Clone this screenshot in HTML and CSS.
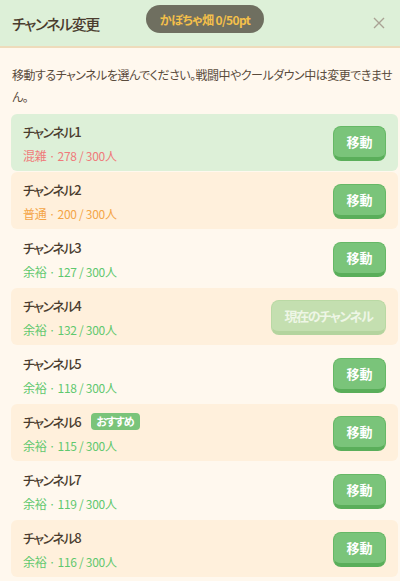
FILE: index.html
```html
<!DOCTYPE html>
<html lang="ja">
<head>
<meta charset="utf-8">
<link rel="stylesheet" href="styles.css">
</head>
<body>
<div class="modal">
  <div class="header">
    <div class="title">チャンネル変更</div>
    <div class="points">かぼちゃ畑 0/50pt</div>
    <button class="close" aria-label="閉じる">
      <svg width="12" height="12" viewBox="0 0 12 12"><path d="M1 1L11 11M11 1L1 11" stroke="#aaa294" stroke-width="1.4" fill="none"/></svg>
    </button>
  </div>
  <div class="body">
    <p class="desc">移動するチャンネルを選んでください。戦闘中やクールダウン中は変更できません。</p>
    <ul class="list">
      <li class="row hover">
        <div class="info"><div class="name">チャンネル1</div><div class="stat busy">混雑 · 278 / 300人</div></div>
        <button class="btn">移動</button>
      </li>
      <li class="row alt">
        <div class="info"><div class="name">チャンネル2</div><div class="stat normal">普通 · 200 / 300人</div></div>
        <button class="btn">移動</button>
      </li>
      <li class="row">
        <div class="info"><div class="name">チャンネル3</div><div class="stat free">余裕 · 127 / 300人</div></div>
        <button class="btn">移動</button>
      </li>
      <li class="row alt">
        <div class="info"><div class="name">チャンネル4</div><div class="stat free">余裕 · 132 / 300人</div></div>
        <button class="btn current">現在のチャンネル</button>
      </li>
      <li class="row">
        <div class="info"><div class="name">チャンネル5</div><div class="stat free">余裕 · 118 / 300人</div></div>
        <button class="btn">移動</button>
      </li>
      <li class="row alt">
        <div class="info"><div class="name">チャンネル6<span class="tag">おすすめ</span></div><div class="stat free">余裕 · 115 / 300人</div></div>
        <button class="btn">移動</button>
      </li>
      <li class="row">
        <div class="info"><div class="name">チャンネル7</div><div class="stat free">余裕 · 119 / 300人</div></div>
        <button class="btn">移動</button>
      </li>
      <li class="row alt">
        <div class="info"><div class="name">チャンネル8</div><div class="stat free">余裕 · 116 / 300人</div></div>
        <button class="btn">移動</button>
      </li>
    </ul>
  </div>
</div>
</body>
</html>
```

FILE: styles.css
```css
* { box-sizing: border-box; }
html, body {
  margin: 0;
  padding: 0;
  background: #fff8ee;
  font-family: "Noto Sans CJK JP", "Noto Sans", sans-serif;
  font-feature-settings: "palt";
  color: #4a3c2e;
}
.modal {
  width: 400px;
  height: 581px;
  overflow: hidden;
  background: #fff8ee;
}
.header {
  position: relative;
  height: 48px;
  background: #ddf0d8;
  border-bottom: 2px solid #eedbbb;
  display: flex;
  align-items: center;
  justify-content: space-between;
  padding: 0 12px;
}
.title {
  font-size: 15px;
  font-weight: 500;
  letter-spacing: -1.5px;
  color: #4a3c2e;
  margin-top: 1px;
}
.points {
  position: absolute;
  left: 146px;
  top: 5px;
  width: 118px;
  height: 28px;
  border-radius: 14px;
  background: #6f6f60;
  color: #f4c04a;
  font-size: 12px;
  font-weight: 700;
  letter-spacing: -0.6px;
  display: flex;
  align-items: center;
  justify-content: center;
}
.close {
  background: none;
  border: 0;
  padding: 0;
  width: 12px;
  height: 12px;
  display: flex;
  margin-right: 3px;
}
.body {
  padding: 16px 2px 0 11px;
}
.desc {
  margin: 0 0 6px 1px;
  font-size: 12px;
  line-height: 22px;
  letter-spacing: -0.5px;
  color: #5a4b3c;
}
.list {
  list-style: none;
  margin: 0;
  padding: 0;
  display: flex;
  flex-direction: column;
  gap: 1px;
}
.row {
  height: 57px;
  border-radius: 6px;
  display: flex;
  align-items: center;
  justify-content: space-between;
  padding: 1px 12px 0;
}
.row.alt { background: #fff0dc; }
.row.hover { background: #ddf0d8; }
.info {
  display: flex;
  flex-direction: column;
  gap: 5px;
}
.name {
  font-size: 13px;
  font-weight: 500;
  line-height: 20px;
  letter-spacing: -1.4px;
  color: #4a3c2e;
  display: flex;
  align-items: center;
  gap: 11px;
}
.tag {
  background: #7ac47a;
  color: #fff;
  font-size: 11px;
  font-weight: 700;
  line-height: 17px;
  letter-spacing: -1px;
  padding: 0 6px 0 5px;
  border-radius: 4px;
}
.stat {
  font-size: 12px;
  line-height: 18px;
  letter-spacing: -0.3px;
}
.stat.busy { color: #f07a7a; }
.stat.normal { color: #f4a546; }
.stat.free { color: #5fc86e; }
.btn {
  font-family: inherit;
  font-feature-settings: "palt";
  height: 35px;
  min-width: 53px;
  padding: 0 10px;
  border: 1px solid #66b866;
  border-bottom: 4px solid #5aae5a;
  border-radius: 8px;
  background: #7ac47a;
  color: #fff;
  font-size: 13px;
  font-weight: 700;
}
.btn.current {
  background: #c4dfb0;
  border-color: #b9d9a4;
  border-bottom-color: #b4d49e;
  color: #eef6e6;
  min-width: 115px;
  letter-spacing: -1.4px;
}
```
